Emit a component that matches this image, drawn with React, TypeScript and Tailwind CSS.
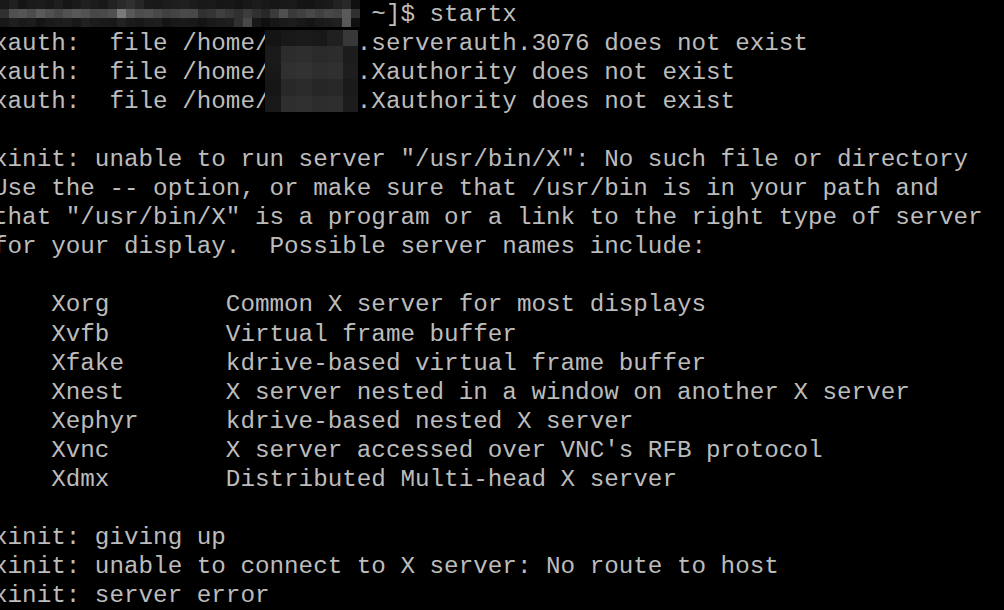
const lines = [
  "                          ~]$ startx",
  "xauth:  file /home/      .serverauth.3076 does not exist",
  "xauth:  file /home/      .Xauthority does not exist",
  "xauth:  file /home/      .Xauthority does not exist",
  "",
  'xinit: unable to run server "/usr/bin/X": No such file or directory',
  "Use the -- option, or make sure that /usr/bin is in your path and",
  'that "/usr/bin/X" is a program or a link to the right type of server',
  "for your display.  Possible server names include:",
  "",
  "    Xorg        Common X server for most displays",
  "    Xvfb        Virtual frame buffer",
  "    Xfake       kdrive-based virtual frame buffer",
  "    Xnest       X server nested in a window on another X server",
  "    Xephyr      kdrive-based nested X server",
  "    Xvnc        X server accessed over VNC's RFB protocol",
  "    Xdmx        Distributed Multi-head X server",
  "",
  "xinit: giving up",
  "xinit: unable to connect to X server: No route to host",
  "xinit: server error",
];

// gray levels of the pixelated redaction on the prompt line
const promptMosaic = [
  [0x18, 0x20, 0x15, 0x1a, 0x1c, 0x18, 0x1e, 0x16, 0x1a, 0x20, 0x1c, 0x18, 0x22, 0x2a, 0x30, 0x26, 0x1a, 0x18, 0x1c, 0x1e, 0x20, 0x1c, 0x18, 0x1a, 0x16, 0x18, 0x14, 0x18, 0x1c, 0x18, 0x16, 0x18, 0x1a, 0x14, 0x14, 0x18, 0x1a, 0x22, 0x28, 0x10],
  [0x30, 0x50, 0x55, 0x4c, 0x5a, 0x50, 0x48, 0x52, 0x58, 0x52, 0x48, 0x4a, 0x50, 0x7a, 0x58, 0x4c, 0x50, 0x48, 0x40, 0x44, 0x4a, 0x48, 0x30, 0x34, 0x40, 0x38, 0x30, 0x3c, 0x30, 0x28, 0x3a, 0x50, 0x3a, 0x40, 0x48, 0x40, 0x48, 0x44, 0x5a, 0x30],
  [0x18, 0x1e, 0x1a, 0x1c, 0x14, 0x1a, 0x1c, 0x1e, 0x18, 0x20, 0x1c, 0x1a, 0x18, 0x22, 0x1a, 0x18, 0x1c, 0x1e, 0x14, 0x18, 0x1a, 0x18, 0x14, 0x1a, 0x1c, 0x1e, 0x30, 0x48, 0x18, 0x10, 0x16, 0x1a, 0x1c, 0x18, 0x14, 0x1a, 0x1c, 0x20, 0x58, 0x10],
];

// username redaction over the xauth lines
const userMosaic = [
  [0x14, 0x18, 0x1a, 0x18, 0x20, 0x38],
  [0x1a, 0x2c, 0x2e, 0x2a, 0x2c, 0x1c],
  [0x18, 0x30, 0x32, 0x2e, 0x30, 0x1e],
  [0x16, 0x28, 0x2a, 0x26, 0x28, 0x1a],
  [0x18, 0x2e, 0x30, 0x2c, 0x2e, 0x1c],
];

const gray = (v: number) => {
  const h = v.toString(16).padStart(2, "0");
  return `#${h}${h}${h}`;
};

function Mosaic({ rows, cell }: { rows: number[][]; cell: [number, number] }) {
  return (
    <div className="flex flex-col">
      {rows.map((row, r) => (
        <div key={r} className="flex">
          {row.map((v, c) => (
            <div key={c} style={{ width: cell[0], height: cell[1], background: gray(v) }} />
          ))}
        </div>
      ))}
    </div>
  );
}

export default function App() {
  return (
    <div className="relative h-[610px] w-[1004px] overflow-hidden bg-black">
      <pre className="-ml-[7px] whitespace-pre font-['Liberation_Mono','DejaVu_Sans_Mono',monospace] text-[24.25px] leading-[29.05px] text-[#bcbcbc]">
        {lines.map((l, i) => (
          <div key={i} className="h-[29.05px]">
            {l}
          </div>
        ))}
      </pre>
      <div className="absolute left-0 top-0">
        <Mosaic rows={promptMosaic} cell={[9, 9]} />
      </div>
      <div className="absolute left-[265px] top-[30px]">
        <Mosaic rows={userMosaic} cell={[15.5, 16.4]} />
      </div>
    </div>
  );
}
